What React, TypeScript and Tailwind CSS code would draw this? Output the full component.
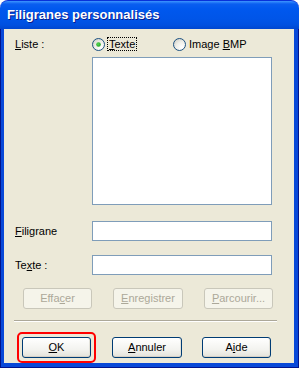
import React from "react";

const font = { fontFamily: '"Liberation Sans", Arial, sans-serif' };

function U({ children }: { children: React.ReactNode }) {
  return <span className="underline underline-offset-[1px]">{children}</span>;
}

function Radio({ checked }: { checked?: boolean }) {
  return (
    <svg width="13" height="13" viewBox="0 0 13 13" className="shrink-0">
      <defs>
        <radialGradient id={checked ? "rg1" : "rg2"} cx="0.7" cy="0.75" r="0.8">
          <stop offset="0" stopColor="#ffffff" />
          <stop offset="0.6" stopColor="#eeeee8" />
          <stop offset="1" stopColor="#d4d3cb" />
        </radialGradient>
        <radialGradient id={checked ? "gd1" : "gd2"} cx="0.4" cy="0.4" r="0.7">
          <stop offset="0" stopColor="#55d855" />
          <stop offset="1" stopColor="#1c9a1c" />
        </radialGradient>
      </defs>
      <circle cx="6.5" cy="6.5" r="6" fill={`url(#${checked ? "rg1" : "rg2"})`} stroke="#1c5180" strokeWidth="1" />
      {checked && <circle cx="6.5" cy="6.5" r="2.3" fill={`url(#gd1)`} />}
    </svg>
  );
}

function Btn({ children, disabled, w = "w-[69px]" }: { children: React.ReactNode; disabled?: boolean; w?: string }) {
  return disabled ? (
    <div className={`${w} h-[21px] rounded-[3px] border border-[#c9c7ba] bg-[#f5f4ea] flex items-center justify-center text-[11px] text-[#aca899]`}>
      {children}
    </div>
  ) : (
    <div className={`${w} h-[21px] rounded-[3px] border border-[#003c74] bg-[linear-gradient(#ffffff,#f3f3ef_60%,#e3e2da)] flex items-center justify-center text-[11px] text-black shadow-[inset_0_-1px_0_#d6d0c5,inset_-1px_0_0_#e3e2da]`}>
      {children}
    </div>
  );
}

export default function App() {
  return (
    <div className="w-[299px] h-[368px] flex flex-col" style={font}>
      <div className="h-[29px] shrink-0 rounded-t-[8px] bg-[linear-gradient(#3d95ff_0px,#0a5ef0_3px,#0058ee_8px,#0055e8_18px,#0050e0_24px,#0046cf_28px)] flex items-start pl-[7px] pt-[6px] border-t border-[#0831d9]">
        <span className="text-white font-bold text-[13px] leading-[16px] [text-shadow:1px_1px_0_#0a1e8c]">
          Filigranes personnalisés
        </span>
      </div>
      <div className="flex-1 flex bg-[#0848d8] pl-[3px] pr-[4px] pb-[4px] border-x border-b border-[#00138c]">
        <div className="flex-1 bg-[#ece9d8] flex flex-col pl-[11px] pr-[2px] pt-[8px] text-[11px] text-black">
          <div className="flex items-center h-[14px]">
            <div className="w-[77px]">
              <U>L</U>iste :
            </div>
            <div className="flex items-center w-[81px]">
              <Radio checked />
              <span className="ml-[2px] px-[1px] border border-dotted border-black leading-[12px]">
                <U>T</U>exte
              </span>
            </div>
            <div className="flex items-center">
              <Radio />
              <span className="ml-[3px]">
                Image <U>B</U>MP
              </span>
            </div>
          </div>
          <div className="ml-[77px] mt-[6px] w-[180px] h-[148px] border border-[#7f9db9] bg-white" />
          <div className="flex items-center mt-[16px] h-[20px]">
            <div className="w-[77px]">
              <U>F</U>iligrane
            </div>
            <div className="w-[180px] h-[20px] border border-[#7f9db9] bg-white" />
          </div>
          <div className="flex items-center mt-[14px] h-[20px]">
            <div className="w-[77px]">
              Te<U>x</U>te :
            </div>
            <div className="w-[180px] h-[20px] border border-[#7f9db9] bg-white" />
          </div>
          <div className="flex ml-[8px] mt-[13px] gap-[21px]">
            <Btn disabled>
              Effa<U>c</U>er
            </Btn>
            <Btn disabled w="w-[70px]">
              <U>E</U>nregistrer
            </Btn>
            <Btn disabled>
              <U>P</U>arcourir...
            </Btn>
          </div>
          <div className="mt-[11px] ml-[-1px] w-[263px] h-[2px] border-t border-[#aca899] border-b border-b-white" />
          <div className="flex items-center mt-[10px] ml-[2px]">
            <div className="rounded-[5px] border-2 border-[#ff0000] p-[3px]">
              <Btn>
                <U>O</U>K
              </Btn>
            </div>
            <div className="ml-[16px]">
              <Btn w="w-[70px]">
                <U>A</U>nnuler
              </Btn>
            </div>
            <div className="ml-[20px]">
              <Btn>
                A<U>i</U>de
              </Btn>
            </div>
          </div>
        </div>
      </div>
    </div>
  );
}
